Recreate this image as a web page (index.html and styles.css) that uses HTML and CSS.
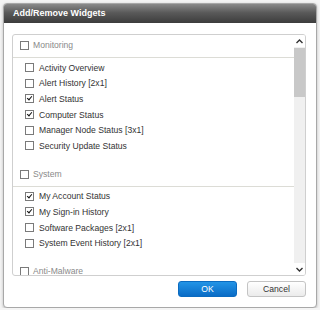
FILE: index.html
```html
<!DOCTYPE html>
<html lang="en">
<head>
    <meta charset="UTF-8">
    <title>Add/Remove Widgets</title>
    <link rel="stylesheet" href="styles.css">
</head>
<body>
    <div class="dialog">
        <div class="dialog-title">Add/Remove Widgets</div>
        <div class="dialog-body">
            <div class="panel">
                <div class="list">
                    <div class="group">
                        <div class="group-head"><span class="cb"></span>Monitoring</div>
                        <ul class="items">
                            <li><span class="cb"></span>Activity Overview</li>
                            <li><span class="cb"></span>Alert History [2x1]</li>
                            <li><span class="cb checked"></span>Alert Status</li>
                            <li><span class="cb checked"></span>Computer Status</li>
                            <li><span class="cb"></span>Manager Node Status [3x1]</li>
                            <li><span class="cb"></span>Security Update Status</li>
                        </ul>
                    </div>
                    <div class="group">
                        <div class="group-head"><span class="cb"></span>System</div>
                        <ul class="items">
                            <li><span class="cb checked"></span>My Account Status</li>
                            <li><span class="cb checked"></span>My Sign-in History</li>
                            <li><span class="cb"></span>Software Packages [2x1]</li>
                            <li><span class="cb"></span>System Event History [2x1]</li>
                        </ul>
                    </div>
                    <div class="group">
                        <div class="group-head"><span class="cb"></span>Anti-Malware</div>
                    </div>
                </div>
                <div class="scrollbar">
                    <div class="arrow">
                        <svg width="7" height="5" viewBox="0 0 7 5"><path d="M0.5 4 L3.5 1 L6.5 4" fill="none" stroke="#333" stroke-width="1.4"/></svg>
                    </div>
                    <div class="track"><div class="thumb"></div></div>
                    <div class="arrow">
                        <svg width="7" height="5" viewBox="0 0 7 5"><path d="M0.5 1 L3.5 4 L6.5 1" fill="none" stroke="#333" stroke-width="1.4"/></svg>
                    </div>
                </div>
            </div>
            <div class="actions">
                <button class="btn btn-primary">OK</button>
                <button class="btn">Cancel</button>
            </div>
        </div>
    </div>
</body>
</html>
```

FILE: styles.css
```css
body {
    margin: 0;
    background-color: #f4f4f4;
    font-family: "Liberation Sans", Arial, sans-serif;
}

.dialog {
    margin: 3px 0 0 3px;
    width: 314px;
    height: 305px;
    box-sizing: border-box;
    border: 1px solid #a8a8a8;
    border-radius: 4px;
    background: white;
    box-shadow: 0 1px 3px rgba(0,0,0,0.25);
    overflow: hidden;
    display: flex;
    flex-direction: column;
}

.dialog-title {
    height: 19px;
    line-height: 19px;
    padding-left: 9px;
    color: white;
    font-weight: bold;
    font-size: 9px;
    background: linear-gradient(#8a8a8a, #5a5a5a 45%, #3c3c3c);
}

.dialog-body {
    padding: 11px 10px 10px 8px;
}

.panel {
    height: 242px;
    box-sizing: border-box;
    border: 1px solid #cfcfcf;
    border-radius: 3px;
    display: flex;
    overflow: hidden;
}

.list {
    flex: 1;
    overflow: hidden;
}

.group-head {
    display: flex;
    align-items: center;
    gap: 4px;
    padding: 3px 0 4px 7px;
    line-height: 15px;
    font-size: 8.6px;
    color: #8a8a8a;
    border-bottom: 1px solid #dcdcd6;
}

.items {
    list-style: none;
    margin: 0;
    padding: 2px 0 10px 12px;
}

.items li {
    display: flex;
    align-items: center;
    gap: 5px;
    height: 15.6px;
    font-size: 8.6px;
    color: #333;
}

.cb {
    position: relative;
    width: 9px;
    height: 9px;
    box-sizing: border-box;
    border: 1px solid #7a7a7a;
    background: white;
    flex-shrink: 0;
}

.cb.checked::after {
    content: "";
    position: absolute;
    left: 2px;
    top: 0;
    width: 2px;
    height: 4px;
    border-right: 1.8px solid #111;
    border-bottom: 1.8px solid #111;
    transform: rotate(40deg);
}

.scrollbar {
    width: 11px;
    display: flex;
    flex-direction: column;
    background: #f0f0f0;
}

.arrow {
    height: 12px;
    display: flex;
    align-items: center;
    justify-content: center;
    background: white;
}

.track {
    flex: 1;
    background: #f0f0f0;
}

.thumb {
    margin-top: 1px;
    height: 49px;
    background: #c8c8c8;
}

.actions {
    display: flex;
    justify-content: flex-end;
    gap: 10px;
    margin-top: 5px;
}

.btn {
    width: 59px;
    height: 16px;
    padding: 0;
    font-family: inherit;
    font-size: 8.6px;
    color: #333;
    border: 1px solid #c4c4c4;
    border-radius: 3px;
    background: linear-gradient(#ffffff, #ebebeb);
}

.btn-primary {
    color: white;
    border-color: #0b6bc0;
    background: linear-gradient(#2394e6, #0a6cc6);
}
```
